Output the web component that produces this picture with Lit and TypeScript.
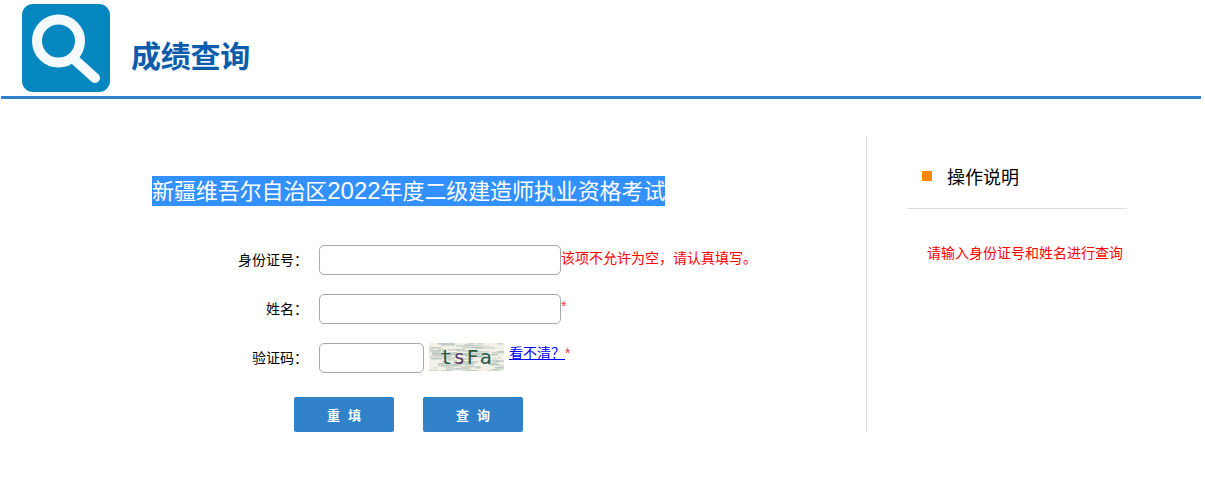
import { LitElement, html, css, svg } from "lit";
import { customElement } from "lit/decorators.js";

const noise = (() => {
  const out: any[] = [];
  let s = 7;
  const r = () => ((s = (s * 9301 + 49297) % 233280) / 233280);
  for (let i = 0; i < 130; i++) {
    const x = Math.floor(r() * 72), y = Math.floor(r() * 28), w = 3 + Math.floor(r() * 12);
    out.push(svg`<rect x=${x} y=${y} width=${w} height="1.5" fill=${r() > 0.5 ? "#bccbc6" : "#d0d5cc"}></rect>`);
  }
  return out;
})();

@customElement("app-root")
export class AppRoot extends LitElement {
  static styles = css`
    :host { display: block; width: 1205px; height: 500px; background: #fff; overflow: hidden;
      font-family: "Liberation Sans", "Noto Sans CJK SC", sans-serif; color: #000; font-size: 14px; }
    .header { display: flex; align-items: flex-end; height: 96px; margin-left: 1px; width: 1179px;
      border-bottom: 3px solid #2f82c9; padding: 0 0 0 21px; box-sizing: content-box; }
    .logo { width: 88px; height: 88px; margin-bottom: 4px; display: block; flex: none; }
    .brand { font-size: 30px; font-weight: 700; line-height: 40px; color: #0b5cab; margin: 0 0 19px 21px; letter-spacing: -0.25px; }
    .main { display: flex; margin-top: 37px; height: 296px; }
    .left { width: 866px; flex: none; border-right: 1px solid #ddd; box-sizing: content-box; }
    .title { margin: 40px 0 0 152px; height: 29px; }
    .title > span { display: inline-block; background: #3390ff; color: #fff; font-size: 22px; line-height: 29px; white-space: nowrap; letter-spacing: -0.1px; }
    .title em { font-style: normal; font-size: 24px; letter-spacing: 0; line-height: 29px; }
    .form { margin-top: 40px; display: grid; grid-template-columns: 308px auto; row-gap: 19px; align-items: start; }
    .lab { text-align: right; height: 30px; line-height: 30px; white-space: nowrap; }
    .field { display: flex; margin-left: 11px; white-space: nowrap; }
    .input { display: block; box-sizing: border-box; height: 30px; border: 1px solid #a9a9a9; border-radius: 5px; background: #fff; padding: 0; margin: 0; outline: none; }
    .w1 { width: 242px; }
    .w2 { width: 105px; }
    .err { color: #f00; line-height: 26px; }
    .star { color: #f33; line-height: 24px; }
    .cap { margin-left: 5px; width: 75px; height: 28px; background: #f3f0e8; position: relative; overflow: hidden; flex: none; }
    .cap svg { position: absolute; inset: 0; }
    .cap span { position: absolute; left: 11px; top: 0; font-family: "DejaVu Sans Mono", monospace; font-size: 20px; line-height: 28px; letter-spacing: 1.2px; color: #2e5a3a; }
    .cap i { font-style: normal; color: #5b3f6a; }
    .cap b { font-weight: 400; color: #1f5b4b; }
    .help { margin-left: 5px; line-height: 20px; display: flex; }
    .help a { color: #00f; text-decoration: underline; }
    .help .s { color: #f33; }
    .btns { display: flex; gap: 29px; margin: 24px 0 0 294px; }
    .btn { width: 100px; height: 35px; border: 0; border-radius: 2px; background: #3182c8; color: #fff; font: 700 13px "Liberation Sans", "Noto Sans CJK SC", sans-serif; padding: 0; display: flex; justify-content: center; align-items: center; gap: 8px; }
    .right { width: 260px; margin-left: 40px; }
    .rh { width: 220px; box-sizing: border-box; border-bottom: 1px solid #ddd; height: 73px; display: flex; align-items: flex-start; padding: 29px 0 0 15px; }
    .sq { width: 10px; height: 10px; background: #ff8800; margin: 6px 15px 0 0; flex: none; }
    .rh span { font-size: 18px; line-height: 24px; margin-top: 1px; }
    .tip { color: #f00; margin: 34px 0 0 20px; line-height: 20px; white-space: nowrap; }
  `;

  render() {
    return html`
      <div class="header">
        <svg class="logo" viewBox="0 0 88 88">
          <rect width="88" height="88" rx="11" fill="#0687bf"></rect>
          <circle cx="36.5" cy="37" r="21.5" fill="none" stroke="#f4f9fb" stroke-width="10"></circle>
          <path d="M53 56 L73 74" stroke="#f4f9fb" stroke-width="10" stroke-linecap="round"></path>
        </svg>
        <div class="brand">成绩查询</div>
      </div>
      <div class="main">
        <div class="left">
          <div class="title"><span>新疆维吾尔自治区<em>2022</em>年度二级建造师执业资格考试</span></div>
          <div class="form">
            <div class="lab">身份证号：</div>
            <div class="field"><div class="input w1"></div><span class="err">该项不允许为空，请认真填写。</span></div>
            <div class="lab">姓名：</div>
            <div class="field"><div class="input w1"></div><span class="star">*</span></div>
            <div class="lab">验证码：</div>
            <div class="field">
              <div class="input w2"></div>
              <div class="cap">
                <svg width="75" height="28">${noise}</svg>
                <span>t<i>s</i>F<b>a</b></span>
              </div>
              <div class="help"><a href="#">看不清？</a><span class="s">*</span></div>
            </div>
          </div>
          <div class="btns">
            <button class="btn"><span>重</span><span>填</span></button>
            <button class="btn"><span>查</span><span>询</span></button>
          </div>
        </div>
        <div class="right">
          <div class="rh"><div class="sq"></div><span>操作说明</span></div>
          <div class="tip">请输入身份证号和姓名进行查询</div>
        </div>
      </div>
    `;
  }
}
